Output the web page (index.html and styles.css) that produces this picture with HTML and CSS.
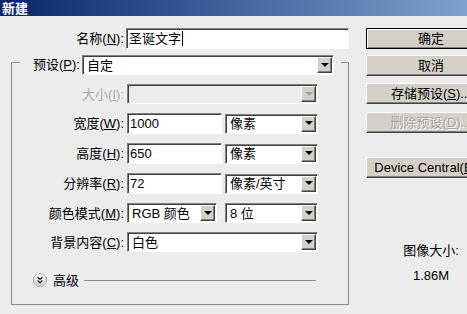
FILE: index.html
```html
<!DOCTYPE html>
<html lang="zh-CN">
  <head>
    <meta charset="UTF-8" />
    <title>新建</title>
    <link rel="stylesheet" href="styles.css">
  </head>
  <body>
    <div class="titlebar">新建</div>
    <div class="dialog">
      <div class="main">
        <div class="name-row">
          <span class="label">名称(<u>N</u>):</span>
          <span class="field field--name">圣诞文字<span class="caret"></span></span>
        </div>

        <fieldset class="group">
          <legend class="group__legend">
            <span class="label">预设(<u>P</u>):</span>
            <span class="select select--preset">自定<i class="select__btn"></i></span>
          </legend>

          <div class="grid">
            <span class="label label--disabled">大小(<u>I</u>):</span>
            <span class="select select--wide select--disabled"><i class="select__btn"></i></span>

            <span class="label">宽度(<u>W</u>):</span>
            <span class="field">1000</span>
            <span class="select">像素<i class="select__btn"></i></span>

            <span class="label">高度(<u>H</u>):</span>
            <span class="field">650</span>
            <span class="select">像素<i class="select__btn"></i></span>

            <span class="label">分辨率(<u>R</u>):</span>
            <span class="field">72</span>
            <span class="select">像素/英寸<i class="select__btn"></i></span>

            <span class="label">颜色模式(<u>M</u>):</span>
            <span class="select select--mode">RGB 颜色<i class="select__btn"></i></span>
            <span class="select">8 位<i class="select__btn"></i></span>

            <span class="label">背景内容(<u>C</u>):</span>
            <span class="select select--wide">白色<i class="select__btn"></i></span>
          </div>

          <div class="advanced">
            <svg class="advanced__icon" viewBox="0 0 14 14">
              <defs>
                <linearGradient id="adv" x1="0" y1="0" x2="0" y2="1">
                  <stop offset="0" stop-color="#ffffff" />
                  <stop offset="1" stop-color="#d0d0d0" />
                </linearGradient>
              </defs>
              <circle cx="7" cy="7" r="6.5" fill="url(#adv)" stroke="#a8a8a8" />
              <polyline points="4.5,4 7,6.3 9.5,4" fill="none" stroke="#222" stroke-width="1.3" />
              <polyline points="4.5,7.5 7,9.8 9.5,7.5" fill="none" stroke="#222" stroke-width="1.3" />
            </svg>
            <span class="advanced__text">高级</span>
            <span class="advanced__line"></span>
          </div>
        </fieldset>
      </div>

      <div class="side">
        <button class="btn btn--default">确定</button>
        <button class="btn btn--cancel">取消</button>
        <button class="btn btn--save">存储预设(<u>S</u>)...</button>
        <button class="btn btn--delete" disabled>删除预设(<u>D</u>)...</button>
        <button class="btn btn--device">Device Central(<u>E</u>)...</button>
        <div class="size-info">
          <div class="size-info__label">图像大小:</div>
          <div class="size-info__value">1.86M</div>
        </div>
      </div>
    </div>
  </body>
</html>
```

FILE: styles.css
```css
* {
  margin: 0;
  padding: 0;
  box-sizing: border-box;
}
html,
body {
  width: 467px;
  height: 314px;
  overflow: hidden;
}
body {
  background-color: #ececec;
  font-family: "Liberation Sans", "Noto Sans CJK SC", sans-serif;
  font-size: 13px;
  line-height: 1;
  color: #000;
}
u {
  text-decoration: underline;
  text-underline-offset: 1px;
}
.titlebar {
  height: 16px;
  padding: 2px 0 0 2px;
  width: 620px;
  background: linear-gradient(to right, #0a246a, #a6caf0);
  color: #fff;
  font-weight: 700;
  font-size: 13px;
}
.dialog {
  display: flex;
  padding-top: 12px;
}
.main {
  width: 349px;
  flex: none;
}
.label {
  text-align: right;
  white-space: nowrap;
}
.label--disabled {
  color: #a8a8a8;
}
.name-row {
  display: grid;
  grid-template-columns: 124px 223px;
  column-gap: 2px;
  align-items: center;
}
.field,
.select {
  display: flex;
  align-items: center;
  height: 21px;
  padding-left: 2px;
  background-color: #fff;
  border: 1px solid;
  border-color: #808080 #fff #fff #808080;
  box-shadow: inset 1px 1px 0 #404040;
  white-space: nowrap;
}
.field--name {
  height: 21px;
}
.caret {
  display: inline-block;
  width: 1px;
  height: 15px;
  margin-left: 1px;
  background-color: #000;
}
.select {
  height: 20px;
  padding-left: 4px;
}
.select__btn {
  margin-left: auto;
  margin-right: 1px;
  width: 15px;
  height: 16px;
  display: grid;
  place-items: center;
  background-color: #d4d0c8;
  border: 1px solid;
  border-color: #fff #404040 #404040 #fff;
  box-shadow: inset -1px -1px 0 #808080;
}
.select__btn::after {
  content: "";
  width: 0;
  height: 0;
  border-left: 4px solid transparent;
  border-right: 4px solid transparent;
  border-top: 4px solid #000;
  margin-bottom: 1px;
}
.select--disabled {
  background-color: #ececec;
}
.select--disabled .select__btn::after {
  border-top-color: #a0a0a0;
}
.group {
  margin: 6px 0 0 11px;
  width: 338px;
  border: 1px solid #8e8e8e;
  padding: 0 0 17px 0;
}
.group__legend {
  display: flex;
  align-items: flex-start;
  height: 15px;
  margin-left: 8px;
  padding: 0 7px 0 13px;
  column-gap: 4px;
}
.group__legend .label {
  line-height: 20px;
  width: 45px;
  text-align: left;
}
.select--preset {
  width: 252px;
  flex: none;
}
.grid {
  display: grid;
  grid-template-columns: 112px 95px 93px;
  column-gap: 3px;
  row-gap: 9px;
  align-items: center;
  padding-top: 14px;
}
.grid .field + .select,
.select--mode + .select {
  margin-left: 4px;
  width: 93px;
  justify-self: end;
}
.select--wide {
  grid-column: span 2;
}
.select--mode {
  width: 90px;
}
.advanced {
  display: flex;
  align-items: center;
  margin-top: 21px;
  padding-left: 21px;
  padding-right: 32px;
}
.advanced__icon {
  width: 14px;
  height: 14px;
  flex: none;
}
.advanced__text {
  margin-left: 6px;
}
.advanced__line {
  flex: 1;
  height: 1px;
  margin-left: 5px;
  background-color: #8a8a8a;
}
.side {
  flex: none;
  width: 130px;
  margin-left: 17px;
  display: flex;
  flex-direction: column;
  align-items: center;
}
.btn {
  width: 130px;
  height: 21px;
  font: inherit;
  white-space: nowrap;
  overflow: hidden;
  background-color: #d4d0c8;
  border: 1px solid;
  border-color: #fff #404040 #404040 #fff;
  box-shadow: inset -1px -1px 0 #808080;
  color: #000;
}
.btn--default {
  border: 1px solid #000;
  box-shadow: inset 1px 1px 0 #fff, inset -1px -1px 0 #808080;
}
.btn--cancel {
  margin-top: 6px;
}
.btn--save {
  margin-top: 7px;
}
.btn--delete {
  margin-top: 8px;
  color: #a0a0a0;
  text-shadow: 1px 1px 0 #fff;
}
.btn--device {
  margin-top: 24px;
}
.size-info {
  margin-top: 66px;
  text-align: center;
}
.size-info__value {
  margin-top: 12px;
}
```
